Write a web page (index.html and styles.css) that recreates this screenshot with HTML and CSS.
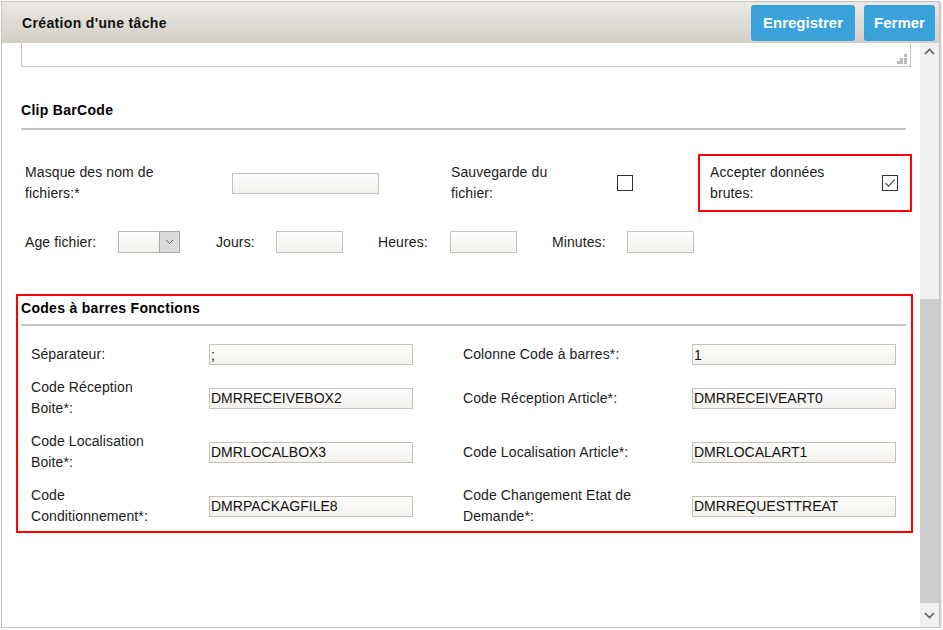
FILE: index.html
```html
<!DOCTYPE html>
<html lang="fr">
<head>
<meta charset="utf-8">
<title>Création d'une tâche</title>
<link rel="stylesheet" href="styles.css">
</head>
<body>
<div class="dialog">
  <div class="dlg-header">
    <h1 class="dlg-title">Création d'une tâche</h1>
    <div class="dlg-actions">
      <button class="btn btn-save" type="button">Enregistrer</button>
      <button class="btn btn-close" type="button">Fermer</button>
    </div>
  </div>
  <div class="dlg-body">
    <div class="dlg-content">
      <div class="textarea-tail">
        <svg class="grip" width="10" height="10" viewBox="0 0 10 10"><rect x="7" y="0" width="3" height="3"/><rect x="3" y="4" width="3" height="3"/><rect x="7" y="4" width="3" height="3"/><rect x="0" y="7" width="3" height="3"/><rect x="3" y="7" width="3" height="3"/><rect x="7" y="7" width="3" height="3"/></svg>
      </div>

      <section class="sec sec-clip">
        <h2 class="sec-title">Clip BarCode</h2>
        <hr class="sec-rule">
        <div class="row-files">
          <label class="lbl lbl-mask">Masque des nom de fichiers:*</label>
          <div class="cell"><input class="inp inp-mask" type="text"></div>
          <label class="lbl lbl-save">Sauvegarde du fichier:</label>
          <div class="cell"><span class="cb"></span></div>
          <div class="highlight hl-raw">
            <label class="lbl lbl-raw">Accepter données brutes:</label>
            <span class="cb cb-checked"><svg width="14" height="14" viewBox="0 0 14 14"><path d="M2.5 7.2 L5.6 10.2 L11.6 3.6" fill="none" stroke="#4a4a4a" stroke-width="1.2"/></svg></span>
          </div>
        </div>
        <div class="row-age">
          <label class="lbl">Age fichier:</label>
          <div class="select"><span class="select-val"></span><span class="select-btn"><svg width="9" height="6" viewBox="0 0 9 6"><path d="M1 1 L4.5 4.5 L8 1" fill="none" stroke="#5a5a5a" stroke-width="1"/></svg></span></div>
          <label class="lbl">Jours:</label>
          <input class="inp inp-small" type="text">
          <label class="lbl">Heures:</label>
          <input class="inp inp-small" type="text">
          <label class="lbl">Minutes:</label>
          <input class="inp inp-small" type="text">
        </div>
      </section>

      <section class="sec sec-codes highlight">
        <h2 class="sec-title">Codes à barres Fonctions</h2>
        <hr class="sec-rule">
        <div class="codes-grid">
          <label class="lbl lbl-left">Séparateur:</label>
          <div class="cell"><input class="inp inp-code" type="text" value=";"></div>
          <label class="lbl lbl-right">Colonne Code à barres*:</label>
          <div class="cell"><input class="inp inp-code" type="text" value="1"></div>

          <label class="lbl lbl-left">Code Réception Boite*:</label>
          <div class="cell"><input class="inp inp-code" type="text" value="DMRRECEIVEBOX2"></div>
          <label class="lbl lbl-right">Code Réception Article*:</label>
          <div class="cell"><input class="inp inp-code" type="text" value="DMRRECEIVEART0"></div>

          <label class="lbl lbl-left">Code Localisation Boite*:</label>
          <div class="cell"><input class="inp inp-code" type="text" value="DMRLOCALBOX3"></div>
          <label class="lbl lbl-right">Code Localisation Article*:</label>
          <div class="cell"><input class="inp inp-code" type="text" value="DMRLOCALART1"></div>

          <label class="lbl lbl-left">Code Conditionnement*:</label>
          <div class="cell"><input class="inp inp-code" type="text" value="DMRPACKAGFILE8"></div>
          <label class="lbl lbl-right">Code Changement Etat de Demande*:</label>
          <div class="cell"><input class="inp inp-code" type="text" value="DMRREQUESTTREAT"></div>
        </div>
      </section>
    </div>

    <div class="scrollbar">
      <div class="sb-arrow sb-up"><svg width="11" height="7" viewBox="0 0 11 7"><path d="M1 6 L5.5 1.5 L10 6" fill="none" stroke="#606060" stroke-width="1.6"/></svg></div>
      <div class="sb-track"><div class="sb-thumb"></div></div>
      <div class="sb-arrow sb-down"><svg width="11" height="7" viewBox="0 0 11 7"><path d="M1 1 L5.5 5.5 L10 1" fill="none" stroke="#606060" stroke-width="1.6"/></svg></div>
    </div>
  </div>
</div>
</body>
</html>
```

FILE: styles.css
```css
* { box-sizing: border-box; }

html, body {
  margin: 0;
  padding: 0;
  background: #ffffff;
  font-family: "Liberation Sans", Arial, sans-serif;
  color: #1c1c1c;
}

.dialog {
  margin: 1px 0 0 1px;
  width: 939px;
  height: 627px;
  border: 1px solid #c4c4c4;
  background: #ffffff;
  box-shadow: 1px 1px 2px rgba(0, 0, 0, 0.25);
  display: flex;
  flex-direction: column;
  overflow: hidden;
}

/* header */
.dlg-header {
  height: 41px;
  flex: none;
  display: flex;
  align-items: center;
  justify-content: space-between;
  padding: 0 4px 0 20px;
  background: linear-gradient(to bottom, #ece9e5 0%, #d3cec7 100%);
}

.dlg-title {
  margin: 0;
  font-size: 14px;
  font-weight: bold;
  letter-spacing: 0.35px;
  color: #111111;
}

.dlg-actions {
  display: flex;
  gap: 9px;
}

.btn {
  height: 36px;
  border: none;
  border-radius: 3px;
  background: #39a2da;
  color: #ffffff;
  font-family: "Liberation Sans", Arial, sans-serif;
  font-size: 15px;
  font-weight: bold;
  padding: 0;
  text-align: center;
}

.btn-save { width: 104px; }
.btn-close { width: 71px; }

/* body */
.dlg-body {
  flex: 1;
  display: flex;
  min-height: 0;
}

.dlg-content {
  flex: 1;
  padding: 0 9px 0 19px;
  overflow: hidden;
}

.textarea-tail {
  position: relative;
  height: 24px;
  border: 1px solid #c9c4be;
  border-top: none;
}

.grip {
  position: absolute;
  right: 3px;
  bottom: 2px;
  fill: #bcbcbc;
}

/* sections */
.sec {
  width: 885px;
}

.sec-title {
  margin: 0;
  font-size: 14px;
  line-height: 20px;
  font-weight: bold;
  letter-spacing: 0.3px;
  color: #000000;
}

.sec-rule {
  margin: 0;
  height: 2px;
  border: none;
  background: #c6c2bd;
}

.sec-clip {
  margin-top: 33px;
}

.sec-clip .sec-rule {
  margin-top: 8px;
}

.lbl {
  font-size: 14px;
  line-height: 21px;
  letter-spacing: 0.1px;
  color: #1c1c1c;
}

.cell {
  display: flex;
  align-items: center;
}

.inp {
  height: 21px;
  margin: 0;
  padding: 0 1px;
  border: 1px solid #c6c1bb;
  background: linear-gradient(to bottom, #fdfdfc 0%, #f3f1ee 100%);
  font-family: "Liberation Sans", Arial, sans-serif;
  font-size: 14px;
  color: #111111;
  outline: none;
}

/* row 1 : files */
.row-files {
  margin-top: 24px;
  padding-left: 4px;
  display: grid;
  grid-template-columns: 207px 219px 166px 81px 214px;
  align-items: center;
}

.lbl-mask { max-width: 150px; }
.lbl-save { max-width: 120px; }
.lbl-raw { max-width: 140px; }

.inp-mask { width: 147px; }

.cb {
  display: inline-flex;
  align-items: center;
  justify-content: center;
  width: 16px;
  height: 16px;
  border: 1px solid #333333;
  background: #ffffff;
}

.highlight {
  border: 2px solid #ff0000;
}

.hl-raw {
  height: 58px;
  display: flex;
  align-items: center;
  justify-content: space-between;
  padding: 0 12px 0 10px;
}

/* row 2 : age */
.row-age {
  margin-top: 19px;
  padding-left: 4px;
  display: grid;
  grid-template-columns: 93px 98px 60px 102px 72px 102px 75px 67px;
  align-items: center;
}

.select {
  width: 62px;
  height: 22px;
  display: flex;
  border: 1px solid #bcb7b1;
  background: linear-gradient(to bottom, #fdfdfc 0%, #f3f1ee 100%);
}

.select-val { flex: 1; }

.select-btn {
  width: 21px;
  display: flex;
  align-items: center;
  justify-content: center;
  background: #dcdcdc;
  border: 1px solid #a9a9a9;
  margin: -1px -1px -1px 0;
}

.inp-small {
  width: 67px;
  height: 22px;
}

/* codes section */
.sec-codes {
  margin: 41px 0 0 -5px;
  width: 897px;
  padding: 2px 5px 4px 3px;
}

.sec-codes .sec-rule {
  margin-top: 6px;
}

.codes-grid {
  margin-top: 18px;
  padding-left: 10px;
  display: grid;
  grid-template-columns: 178px 254px 229px 204px;
  row-gap: 12px;
  align-items: center;
}

.lbl-left { padding-right: 48px; }
.lbl-right { padding-right: 20px; }

.inp-code { width: 204px; }

/* scrollbar */
.scrollbar {
  width: 19px;
  flex: none;
  display: flex;
  flex-direction: column;
  background: #f0f0f0;
}

.sb-arrow {
  display: flex;
  align-items: center;
  justify-content: center;
}

.sb-up { height: 17px; }
.sb-down { height: 23px; }

.sb-track {
  flex: 1;
}

.sb-thumb {
  margin-top: 239px;
  height: 304px;
  background: #cdcdcd;
}
```
